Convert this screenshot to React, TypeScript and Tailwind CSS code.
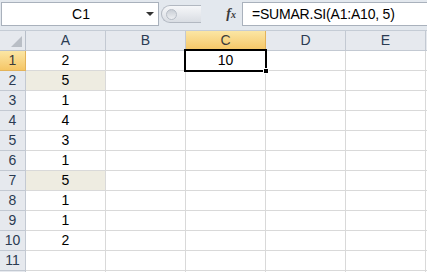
const cols = ['A', 'B', 'C', 'D', 'E'];
const values: Record<number, string> = { 1: '2', 2: '5', 3: '1', 4: '4', 5: '3', 6: '1', 7: '5', 8: '1', 9: '1', 10: '2' };
const shaded = [2, 7];

function FxIcon() {
  return (
    <span className="italic font-bold text-[#3a3a3a] text-[14px] leading-none" style={{ fontFamily: '"Liberation Serif", serif' }}>
      f<span className="text-[10px]">x</span>
    </span>
  );
}

export default function App() {
  const rows = Array.from({ length: 12 }, (_, i) => i + 1);
  return (
    <div className="w-[427px] h-[272px] overflow-hidden bg-white relative" style={{ fontFamily: '"Liberation Sans", Arial, sans-serif' }}>
      {/* formula bar */}
      <div className="h-[31px] bg-[#e3e8ee] flex items-start pt-[2px] border-b border-[#c5ccd5]">
        <div className="ml-[1px] w-[158px] h-[24px] bg-white border border-[#a9b1bc] flex items-center">
          <span className="flex-1 text-center text-[14px] text-black pl-[14px]">C1</span>
          <span className="w-0 h-0 border-l-[4px] border-r-[4px] border-t-[4px] border-l-transparent border-r-transparent border-t-[#333] mr-[4px]" />
        </div>
        <div className="w-[83px] h-[24px] flex items-center">
          <div className="ml-[2px] w-[40px] h-[18px] rounded-l-full bg-gradient-to-b from-[#f6f7f9] to-[#d9dde3] border border-[#b2b8c1] border-r-0 flex items-center pl-[4px]">
            <div className="w-[11px] h-[11px] rounded-full bg-gradient-to-b from-[#c9ced5] to-[#eef0f3] border border-[#b7bdc6]" />
          </div>
          <div className="flex-1 flex justify-end pr-[6px]">
            <FxIcon />
          </div>
        </div>
        <div className="flex-1 h-[24px] bg-white border border-[#a9b1bc] border-r-0 flex items-center pl-[9px]">
          <span className="text-[14px] text-black tracking-[-0.2px]">=SUMAR.SI(A1:A10, 5)</span>
        </div>
      </div>

      {/* grid */}
      <div className="grid grid-cols-[26px_repeat(5,80px)_1px]">
        {/* header row */}
        <div className="h-[20px] bg-[#e6e9ee] border-r border-b border-[#b8bfc9] relative">
          <svg className="absolute right-[3px] bottom-[3px]" width="11" height="11"><polygon points="11,0 11,11 0,11" fill="#b9bec5" /></svg>
        </div>
        {cols.map((c) => (
          <div
            key={c}
            className={
              c === 'C'
                ? 'h-[20px] border-r border-b border-[#e3b35a] bg-gradient-to-b from-[#fbe6a4] to-[#f5c665] flex items-center justify-center text-[14px] text-[#3b3b3b]'
                : 'h-[20px] border-r border-b border-[#c3c9d2] bg-[#e6e9ee] flex items-center justify-center text-[14px] text-[#2b3b52]'
            }
          >
            {c}
          </div>
        ))}
        <div className="h-[20px] bg-[#e6e9ee] border-b border-[#c3c9d2]" />

        {rows.map((r) => (
          <Row key={r} r={r} />
        ))}
      </div>

      {/* active cell */}
      <div className="absolute left-[184px] top-[49px] w-[83px] h-[23px] border-2 border-black" />
      <div className="absolute left-[263px] top-[68px] w-[6px] h-[6px] bg-black border border-white" />
    </div>
  );
}

function Row({ r }: { r: number }) {
  return (
    <>
      <div
        className={
          r === 1
            ? 'h-[20px] border-r border-b border-[#e3b35a] bg-gradient-to-b from-[#fbe6a4] to-[#f5c665] flex items-center justify-center text-[14px] text-[#3b3b3b]'
            : 'h-[20px] border-r border-b border-[#c3c9d2] bg-[#e6e9ee] flex items-center justify-center text-[14px] text-[#2b3b52]'
        }
      >
        {r <= 11 ? r : ''}
      </div>
      {cols.map((c) => (
        <div
          key={c}
          className={
            'h-[20px] border-r border-b border-[#d9d9d9] flex items-center justify-center text-[14px] text-black ' +
            (c === 'A' && shaded.includes(r) ? 'bg-[#eeece1]' : 'bg-white')
          }
        >
          {c === 'A' ? values[r] ?? '' : c === 'C' && r === 1 ? '10' : ''}
        </div>
      ))}
      <div className="h-[20px] border-b border-[#d9d9d9] bg-white" />
    </>
  );
}
